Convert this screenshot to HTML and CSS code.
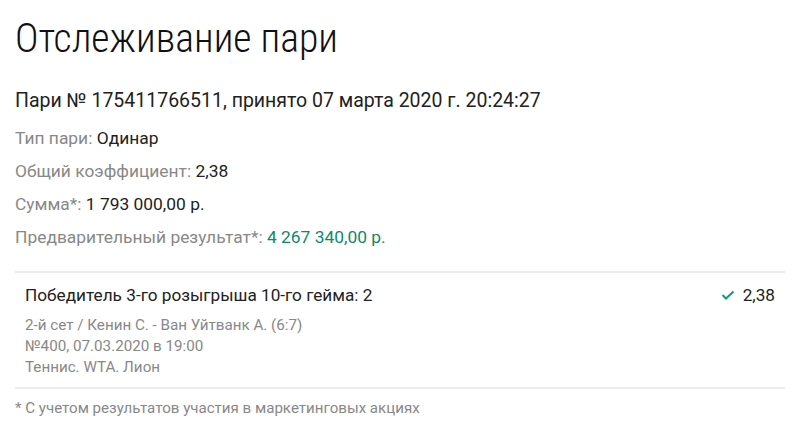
FILE: index.html
```html
<!DOCTYPE html>
<html lang="ru">
<head>
    <meta charset="UTF-8">
    <meta name="viewport" content="width=device-width, initial-scale=1.0">
    <title>Отслеживание пари</title>
    <link rel="stylesheet" href="styles.css">
</head>
<body>
    <div class="page">
        <h1>Отслеживание пари</h1>
        <p class="bet-head">Пари № 175411766511, принято 07 марта 2020 г. 20:24:27</p>
        <ul class="info">
            <li><span class="label">Тип пари:</span> Одинар</li>
            <li><span class="label">Общий коэффициент:</span> 2,38</li>
            <li><span class="label">Сумма*:</span> 1 793 000,00 р.</li>
            <li><span class="label">Предварительный результат*:</span> <span class="win">4 267 340,00 р.</span></li>
        </ul>
        <div class="event">
            <div class="event-top">
                <div class="event-name">Победитель 3-го розыгрыша 10-го гейма: 2</div>
                <div class="event-coef">
                    <svg class="check" width="14" height="10" viewBox="0 0 14 10">
                        <path d="M1.5 5 L5 8.5 L12.5 1.5" fill="none" stroke="#0e9f74" stroke-width="2"/>
                    </svg>
                    2,38
                </div>
            </div>
            <div class="event-details">
                <div>2-й сет / Кенин С. - Ван Уйтванк А. (6:7)</div>
                <div>№400, 07.03.2020 в 19:00</div>
                <div>Теннис. WTA. Лион</div>
            </div>
        </div>
        <p class="note">* С учетом результатов участия в маркетинговых акциях</p>
    </div>
</body>
</html>
```

FILE: styles.css
```css
body {
    margin: 0;
    background: #fff;
    font-family: Roboto, "Liberation Sans", sans-serif;
    color: #222;
}
.page {
    padding: 17px 15px 0 15px;
}
h1 {
    margin: 0;
    font-size: 39.8px;
    font-weight: 350;
    font-stretch: 75%;
    line-height: 44px;
    color: #111;
}
.bet-head {
    margin: 27px 0 0 0;
    font-size: 19.5px;
    line-height: 26px;
}
.info {
    list-style: none;
    margin: 8px 0 0 0;
    padding: 0;
}
.info li {
    font-size: 17.4px;
    line-height: 33px;
}
.label {
    color: #888;
}
.win {
    color: #0a8a6c;
}
.event {
    margin-top: 17px;
    border-top: 2px solid #ececec;
    border-bottom: 2px solid #ececec;
    padding: 11px 10px 9px 10px;
}
.event-top {
    display: flex;
    justify-content: space-between;
    font-size: 17.2px;
    line-height: 22px;
}
.event-coef {
    display: flex;
    align-items: center;
    gap: 8px;
}
.event-details {
    margin-top: 9px;
    font-size: 15.2px;
    line-height: 21px;
    color: #888;
}
.note {
    margin: 9px 0 0 0;
    font-size: 15.1px;
    line-height: 20px;
    color: #888;
}
```
